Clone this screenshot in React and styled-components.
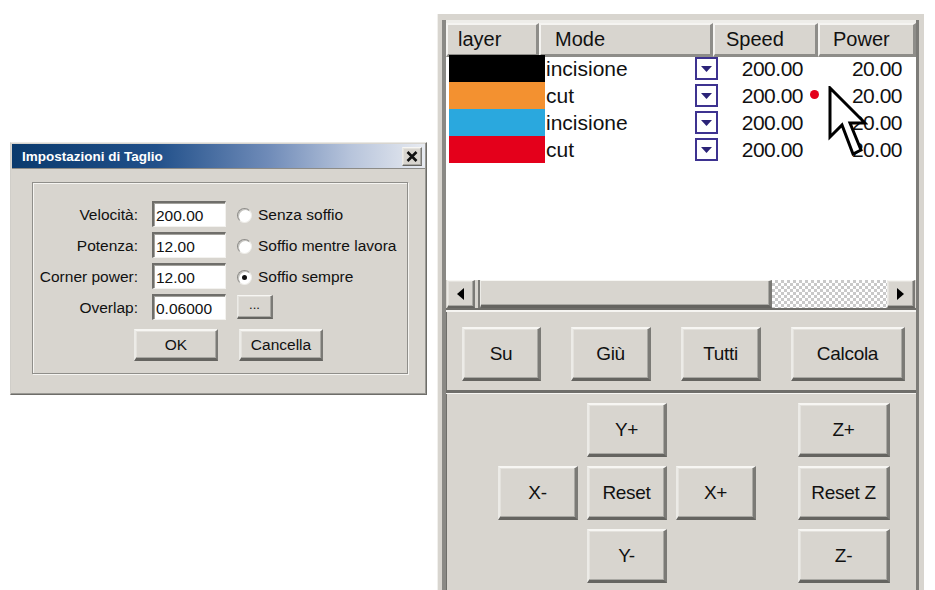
import React from 'react'
import styled, { createGlobalStyle, css } from 'styled-components'

const GlobalStyle = createGlobalStyle`
  body {
    margin: 0;
    background: #ffffff;
    font-family: "Liberation Sans", Arial, sans-serif;
    color: #111;
  }
  * { box-sizing: border-box; }
`

const raised = css`
  background: #d8d5cf;
  border-style: solid;
  border-color: #f7f6f3 #7b7a76 #656460 #ecebe7;
  box-shadow: inset -1px -1px 0 #a9a8a3, inset 1px 1px 0 #e4e2dd;
`

const rows = [
  { color: '#000000', mode: 'incisione', speed: '200.00', power: '20.00' },
  { color: '#f39130', mode: 'cut', speed: '200.00', power: '20.00' },
  { color: '#2aa8de', mode: 'incisione', speed: '200.00', power: '20.00' },
  { color: '#e4001b', mode: 'cut', speed: '200.00', power: '20.00' },
]

const fields = [
  { label: 'Velocità:', value: '200.00', radio: 'Senza soffio' },
  { label: 'Potenza:', value: '12.00', radio: 'Soffio mentre lavora' },
  { label: 'Corner power:', value: '12.00', radio: 'Soffio sempre', checked: true },
  { label: 'Overlap:', value: '0.06000', more: true },
]

function App() {
  return (
    <Page>
      <GlobalStyle />
      <Dialog>
        <TitleBar>
          <Title>Impostazioni di Taglio</Title>
          <CloseBtn>
            <svg width="12" height="11" viewBox="0 0 12 11">
              <path d="M1.5 1 L10.5 10 M10.5 1 L1.5 10" stroke="#111" strokeWidth="2.6" />
            </svg>
          </CloseBtn>
        </TitleBar>
        <DialogBody>
          <GroupBox>
            <FormGrid>
              {fields.map((f) => (
                <React.Fragment key={f.label}>
                  <Label>{f.label}</Label>
                  <Input>{f.value}</Input>
                  {f.more ? (
                    <MoreBtn>...</MoreBtn>
                  ) : (
                    <Radio>
                      <RadioCircle $checked={f.checked} />
                      {f.radio}
                    </Radio>
                  )}
                </React.Fragment>
              ))}
            </FormGrid>
            <DialogButtons>
              <DialogBtn>OK</DialogBtn>
              <DialogBtn>Cancella</DialogBtn>
            </DialogButtons>
          </GroupBox>
        </DialogBody>
      </Dialog>

      <Panel>
        <Frame>
          <ListBox>
            <Header>
              <HeaderCell $pl={10}>layer</HeaderCell>
              <HeaderCell $pl={14}>Mode</HeaderCell>
              <HeaderCell $pl={11}>Speed</HeaderCell>
              <HeaderCell $pl={13}>Power</HeaderCell>
            </Header>
            <Rows>
              {rows.map((r, i) => (
                <Row key={i}>
                  <span />
                  <Swatch $color={r.color} />
                  <ModeText>{r.mode}</ModeText>
                  <DropBox>
                    <svg width="11" height="6" viewBox="0 0 11 6">
                      <path d="M0 0 H11 L5.5 6 Z" fill="#2b2378" />
                    </svg>
                  </DropBox>
                  <NumCell>{r.speed}</NumCell>
                  <NumCell>{r.power}</NumCell>
                </Row>
              ))}
              <RedDot />
              <Cursor width="40" height="74" viewBox="0 0 40 74">
                <path
                  d="M2 2 L2 51 L14 39 L25 68 L33 64 L22 37 L37 37 Z"
                  fill="#ffffff"
                  stroke="#000000"
                  strokeWidth="3"
                  strokeLinejoin="miter"
                />
              </Cursor>
            </Rows>
            <ScrollBar>
              <ArrowBtn>
                <svg width="7" height="12" viewBox="0 0 7 12">
                  <path d="M7 0 V12 L0 6 Z" fill="#000" />
                </svg>
              </ArrowBtn>
              <Thumb />
              <Checker />
              <ArrowBtn>
                <svg width="7" height="12" viewBox="0 0 7 12">
                  <path d="M0 0 V12 L7 6 Z" fill="#000" />
                </svg>
              </ArrowBtn>
            </ScrollBar>
          </ListBox>

          <ButtonBar>
            <Btn $w={79}>Su</Btn>
            <Btn $w={80}>Giù</Btn>
            <Btn $w={80}>Tutti</Btn>
            <Btn $w={114}>Calcola</Btn>
          </ButtonBar>

          <JogArea>
            <JogGrid>
              <Btn $col={2} $row={1}>Y+</Btn>
              <Btn $col={4} $row={1} $z>Z+</Btn>
              <Btn $col={1} $row={2}>X-</Btn>
              <Btn $col={2} $row={2}>Reset</Btn>
              <Btn $col={3} $row={2}>X+</Btn>
              <Btn $col={4} $row={2} $z>Reset Z</Btn>
              <Btn $col={2} $row={3}>Y-</Btn>
              <Btn $col={4} $row={3} $z>Z-</Btn>
            </JogGrid>
          </JogArea>
        </Frame>
      </Panel>
    </Page>
  )
}

export default App

const Page = styled.div`
  display: flex;
  align-items: flex-start;
  padding-left: 10px;
  height: 590px;
  overflow: hidden;
`

/* ---------- dialog ---------- */

const Dialog = styled.div`
  margin-top: 142px;
  width: 417px;
  height: 253px;
  background: #d8d5cf;
  border: 1px solid;
  border-color: #e9e8e4 #6e6d69 #6e6d69 #d0cec9;
  box-shadow: inset -1px -1px 0 #9a9994;
  padding: 1px;
`

const TitleBar = styled.div`
  height: 25px;
  display: flex;
  align-items: center;
  justify-content: space-between;
  padding: 0 3px 0 10px;
  background: linear-gradient(to right, #0a3a6d 0%, #21508a 35%, #6f8bb8 62%, #b7c4db 82%, #e8ebf1 100%);
  border-bottom: 1px solid #8c8b87;
`

const Title = styled.span`
  color: #fff;
  font-weight: bold;
  font-size: 13.5px;
`

const CloseBtn = styled.div`
  ${raised};
  width: 20px;
  height: 19px;
  border-width: 1px;
  display: flex;
  align-items: center;
  justify-content: center;
`

const DialogBody = styled.div`
  padding: 13px 17px 17px 20px;
`

const GroupBox = styled.div`
  height: 192px;
  border: 1px solid #8f8e8a;
  box-shadow: inset 1px 1px 0 #f6f5f2, 1px 1px 0 #f6f5f2;
  padding-top: 18px;
`

const FormGrid = styled.div`
  display: grid;
  grid-template-columns: 105px 74px auto;
  grid-auto-rows: 26px;
  column-gap: 14px;
  row-gap: 5px;
  align-items: center;
  font-size: 15.5px;

  & > :nth-child(3n) {
    margin-left: -3px;
  }
`

const Label = styled.div`
  text-align: right;
  padding-top: 2px;
`

const Input = styled.div`
  height: 26px;
  background: #fff;
  border-style: solid;
  border-width: 2px 1px 1px 2px;
  border-color: #6f6e6a #f3f2ef #f3f2ef #6f6e6a;
  box-shadow: inset 1px 1px 0 #a3a29d;
  padding: 3px 0 0 2px;
  line-height: 20px;
`

const Radio = styled.div`
  display: flex;
  align-items: center;
  gap: 6px;
  padding-top: 2px;
`

const RadioCircle = styled.span`
  width: 15px;
  height: 15px;
  border-radius: 50%;
  background: #fff;
  border: 1px solid;
  border-color: #8d8c88 #eeede9 #eeede9 #8d8c88;
  box-shadow: inset 1px 1px 0 #c4c3be;
  position: relative;

  &::after {
    content: '';
    display: ${({ $checked }) => ($checked ? 'block' : 'none')};
    position: absolute;
    left: 4px;
    top: 4px;
    width: 5px;
    height: 5px;
    border-radius: 50%;
    background: #111;
  }
`

const MoreBtn = styled.div`
  ${raised};
  border-width: 1px 2px 2px 1px;
  width: 36px;
  height: 24px;
  font-size: 13px;
  text-align: center;
  line-height: 18px;
`

const DialogButtons = styled.div`
  display: flex;
  gap: 21px;
  padding-left: 101px;
  margin-top: 9px;
`

const DialogBtn = styled.div`
  ${raised};
  border-width: 2px 2px 3px 2px;
  width: 84px;
  height: 32px;
  display: flex;
  align-items: center;
  justify-content: center;
  font-size: 15.5px;
`

/* ---------- right panel ---------- */

const Panel = styled.div`
  margin-left: 10px;
  margin-top: 14px;
  width: 487px;
  height: 576px;
  background: #d8d5cf;
  border-left: 1px solid #f1f0ed;
  padding: 6px 5px 0 4px;
  display: flex;
`

const Frame = styled.div`
  flex: 1;
  display: flex;
  flex-direction: column;
  border-left: 4px solid #8a8985;
  border-right: 3px solid #7d7c78;
  box-shadow: inset 1px 0 0 #6f6e6a;
`

const ListBox = styled.div`
  height: 290px;
  background: #fff;
  border-top: 3px solid #eeede9;
  border-bottom: 2px solid #6f6e6a;
  display: flex;
  flex-direction: column;
`

const Header = styled.div`
  display: grid;
  grid-template-columns: 93px 174px 105px 98px;
  height: 30px;
`

const HeaderCell = styled.div`
  background: #d8d5cf;
  border-style: solid;
  border-width: 2px 3px 3px 2px;
  border-color: #f5f4f1 #8e8d89 #8e8d89 #f5f4f1;
  padding-left: ${({ $pl }) => $pl}px;
  font-size: 20px;
  line-height: 29px;
`

const Rows = styled.div`
  position: relative;
  padding-top: 2px;
`

const Row = styled.div`
  display: grid;
  grid-template-columns: 3px 96px 150px 23px 85px 99px;
  height: 27px;
  align-items: center;
  font-size: 21px;
`

const Swatch = styled.div`
  height: 27px;
  background: ${({ $color }) => $color};
`

const ModeText = styled.div`
  padding-left: 1px;
`

const DropBox = styled.div`
  width: 23px;
  height: 23px;
  border: 2px solid #3d3290;
  background: #fff;
  display: flex;
  align-items: center;
  justify-content: center;
`

const NumCell = styled.div`
  text-align: right;
  letter-spacing: -0.5px;
`

const RedDot = styled.span`
  position: absolute;
  left: 364px;
  top: 37px;
  width: 9px;
  height: 9px;
  border-radius: 50%;
  background: #e4001b;
`

const Cursor = styled.svg`
  position: absolute;
  left: 382px;
  top: 33px;
`

const ScrollBar = styled.div`
  margin-top: auto;
  display: flex;
  height: 28px;
  padding-left: 1px;
  background: #d8d5cf;
`

const ArrowBtn = styled.div`
  ${raised};
  border-width: 1px 2px 2px 1px;
  width: 28px;
  display: flex;
  align-items: center;
  justify-content: center;
`

const Thumb = styled.div`
  ${raised};
  border-width: 1px 3px 3px 1px;
  width: 292px;
  margin-left: 5px;
  box-shadow: -2px 0 0 #7b7a76, inset -1px -1px 0 #a9a8a3;
`

const Checker = styled.div`
  width: 115px;
  background: repeating-conic-gradient(#c9c9c9 0 25%, #ffffff 0 50%) 0 0 / 6px 6px;
`

const ButtonBar = styled.div`
  border-top: 2px solid #f6f5f2;
  border-bottom: 3px solid #6f6e6a;
  height: 83px;
  display: flex;
  justify-content: space-between;
  padding: 15px 11px 0 16px;
`

const JogArea = styled.div`
  flex: 1;
  border-top: 1px solid #f6f5f2;
  padding: 9px 0 0 52px;
`

const JogGrid = styled.div`
  display: grid;
  grid-template-columns: 80px 80px 80px 92px;
  grid-template-rows: repeat(3, 55px);
  column-gap: 9px;
  row-gap: 8px;
`

const Btn = styled.div`
  ${raised};
  border-width: 2px 3px 3px 2px;
  width: ${({ $w }) => ($w ? `${$w}px` : 'auto')};
  height: 54px;
  display: flex;
  align-items: center;
  justify-content: center;
  font-size: 19px;
  letter-spacing: -0.3px;
  grid-column: ${({ $col }) => $col || 'auto'};
  grid-row: ${({ $row }) => $row || 'auto'};
  margin-left: ${({ $z }) => ($z ? '33px' : '0')};
  margin-right: ${({ $z }) => ($z ? '-33px' : '0')};
`
